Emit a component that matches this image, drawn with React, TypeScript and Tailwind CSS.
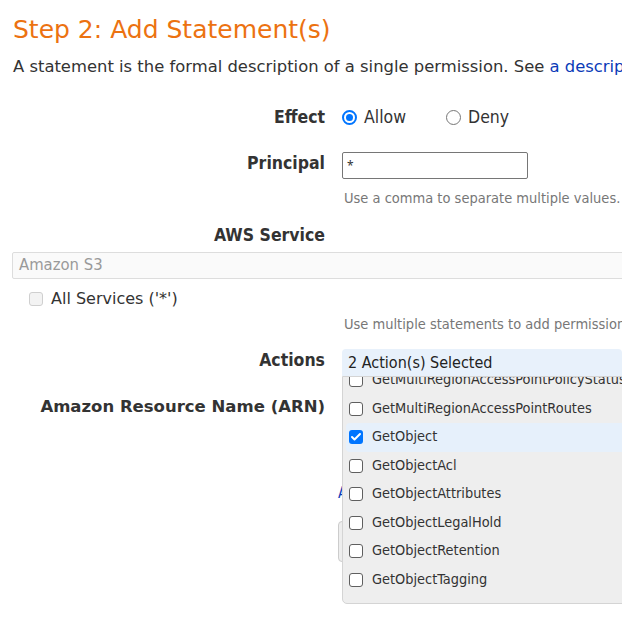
import { Check } from 'lucide-react';

const verdana = { fontFamily: '"DejaVu Sans", Verdana, sans-serif' };
const tahoma = { fontFamily: '"DejaVu Sans Condensed", "DejaVu Sans", Tahoma, sans-serif' };

const actions = [
  'GetMultiRegionAccessPointPolicyStatus',
  'GetMultiRegionAccessPointRoutes',
  'GetObject',
  'GetObjectAcl',
  'GetObjectAttributes',
  'GetObjectLegalHold',
  'GetObjectRetention',
  'GetObjectTagging',
];

function Box({ checked }: { checked?: boolean }) {
  if (checked) {
    return (
      <span className="flex h-[14px] w-[14px] shrink-0 items-center justify-center rounded-[3px] bg-[#0075ff]">
        <Check size={12} strokeWidth={4} className="text-white" />
      </span>
    );
  }
  return <span className="h-[14px] w-[14px] shrink-0 rounded-[3px] border border-[#5f5f5f] bg-white" />;
}

function Radio({ checked }: { checked?: boolean }) {
  return checked ? (
    <span className="flex h-[15px] w-[15px] items-center justify-center rounded-full border-2 border-[#0075ff] bg-white">
      <span className="h-[7px] w-[7px] rounded-full bg-[#0075ff]" />
    </span>
  ) : (
    <span className="h-[15px] w-[15px] rounded-full border border-[#767676] bg-white" />
  );
}

function Label({ children }: { children: React.ReactNode }) {
  return (
    <div style={tahoma} className="w-[325px] shrink-0 text-right text-[17.5px] font-bold leading-[22px] text-[#333]">
      {children}
    </div>
  );
}

export default function App() {
  const picked = 'GetObject';

  return (
    <div className="relative h-[620px] w-[622px] overflow-hidden bg-white text-[#333]">
      <div className="pl-[13px] pt-[15px]">
        <h2 style={verdana} className="whitespace-nowrap text-[25px] leading-[30px] text-[#ec7211]">
          Step 2: Add Statement(s)
        </h2>
        <p style={verdana} className="mt-[12px] whitespace-nowrap text-[16.4px] leading-[20px]">
          A statement is the formal description of a single permission. See{' '}
          <a className="text-[#0b3bb8]">a description of elements</a> that you can use in statements.
        </p>
      </div>

      {/* effect */}
      <div className="mt-[27px] flex h-[26px] items-center">
        <Label>Effect</Label>
        <div style={tahoma} className="ml-[17px] flex items-center text-[17.5px] text-[#333]">
          <label className="flex items-center gap-[7px]">
            <Radio checked />
            Allow
          </label>
          <label className="ml-[40px] flex items-center gap-[7px]">
            <Radio />
            Deny
          </label>
        </div>
      </div>

      {/* principal */}
      <div className="mt-[22px] flex items-start">
        <Label>Principal</Label>
        <div className="ml-[17px]">
          <div className="flex h-[27px] w-[186px] items-center rounded-[2px] border border-[#767676] px-[4px] text-[12px]">
            *
          </div>
          <p style={tahoma} className="mt-[10px] whitespace-nowrap pl-[2px] text-[14.5px] leading-[18px] text-[#777]">
            Use a comma to separate multiple values.
          </p>
        </div>
      </div>

      {/* service */}
      <div className="mt-[17px]">
        <Label>AWS Service</Label>
      </div>
      <div
        style={tahoma}
        className="ml-[12px] mt-[6px] flex h-[27px] w-[620px] items-center rounded-[2px] border border-[#dddddd] bg-[#fafafa] px-[6px] text-[16.5px] text-[#999]"
      >
        Amazon S3
      </div>
      <label
        style={verdana}
        className="ml-[29px] mt-[10px] flex h-[20px] items-center gap-[8px] text-[16px] text-[#333]"
      >
        <span className="h-[14px] w-[14px] rounded-[3px] border border-[#cfcfcf] bg-[#f3f3f3]" />
        All Services ('*')
      </label>
      <p style={tahoma} className="ml-[344px] mt-[6px] whitespace-nowrap text-[14.5px] leading-[18px] text-[#777]">
        Use multiple statements to add permissions for more than one service.
      </p>

      {/* actions */}
      <div className="mt-[16px] flex items-start">
        <Label>Actions</Label>
        <div
          style={tahoma}
          className="ml-[17px] flex h-[27px] w-[300px] items-center rounded-t-[4px] bg-[#e8f1fb] px-[6px] text-[16px] text-[#222]"
        >
          2 Action(s) Selected
        </div>
      </div>

      {/* arn */}
      <div className="mt-[20px] flex">
        <div
          style={verdana}
          className="w-[325px] shrink-0 text-right text-[16.5px] font-bold leading-[22px] text-[#333]"
        >
          Amazon Resource Name (ARN)
        </div>
      </div>
      <div className="ml-[338px] mt-[65px]">
        <a style={tahoma} className="block text-[15px] leading-[20px] text-[#0b3bb8]">
          Add ARN(s) to restrict access.
        </a>
        <div className="mt-[18px] h-[41px] w-[160px] rounded-[4px] border border-[#cccccc] bg-[#eeeeee]" />
      </div>

      {/* action list */}
      <div className="absolute left-[342px] top-[376px] h-[228px] w-[300px] overflow-hidden rounded-b-[5px] border border-[#d4d4d4] bg-[#eeeeee]">
        <div className="-mt-[11px] pl-[3px]">
          {actions.map((a) => (
            <div
              key={a}
              style={tahoma}
              className={`flex h-[28.5px] items-center gap-[9px] whitespace-nowrap rounded-l-[4px] pl-[3px] text-[14.4px] text-[#333] ${
                a === picked ? 'bg-[#e6f0fb]' : ''
              }`}
            >
              <Box checked={a === picked} />
              {a}
            </div>
          ))}
        </div>
      </div>
    </div>
  );
}
